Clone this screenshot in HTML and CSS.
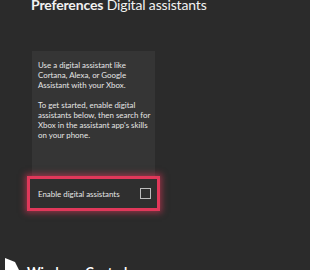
FILE: index.html
```html
<!DOCTYPE html>
<html lang="en">
<head>
    <meta charset="UTF-8">
    <meta name="viewport" content="width=device-width, initial-scale=1.0">
    <title>Digital assistants</title>
    <link rel="stylesheet" href="styles.css">
</head>
<body>

<h1 class="page-title"><strong>Preferences</strong> Digital assistants</h1>

<!-- Settings panel -->
<div class="panel">
    <p>Use a digital assistant like Cortana, Alexa, or Google Assistant with your Xbox.</p>
    <p>To get started, enable digital assistants below, then search for Xbox in the assistant app's skills on your phone.</p>

    <div class="option focused">
        <span class="option-label">Enable digital assistants</span>
        <span class="checkbox"></span>
    </div>
</div>

<!-- Watermark -->
<div class="watermark">
    <svg width="18" height="16" viewBox="0 0 18 16">
        <path d="M0 0 L10 4 L16 16 L0 16 Z" fill="#fff"/>
    </svg>
    <span>Windows Central</span>
</div>

</body>
</html>
```

FILE: styles.css
```css
body {
    margin: 0;
    width: 310px;
    height: 270px;
    overflow: hidden;
    background-color: #2b2b2b;
    font-family: Lato, "Open Sans", sans-serif;
    color: #e6e6e6;
    position: relative;
}
.page-title {
    margin: -5px 0 0 31px;
    font-size: 14px;
    font-weight: normal;
    line-height: 20px;
    letter-spacing: -0.15px;
    color: #f2f2f2;
}
.page-title strong {
    font-weight: 700;
}
.panel {
    margin: 36px 0 0 32px;
    width: 123px;
    padding: 9px 4px 0 6px;
    box-sizing: border-box;
    background-color: #353535;
    height: 155px;
}
.panel p {
    margin: 0 0 10px;
    font-size: 7.9px;
    line-height: 10px;
}
.option {
    margin: 36px -9px 0 -11px;
    height: 35px;
    box-sizing: border-box;
    display: flex;
    align-items: center;
    justify-content: space-between;
    padding: 0 6px 0 8px;
    background-color: #2f2f2f;
    font-size: 7.9px;
}
.option.focused {
    border: 3px solid #e0385a;
    box-shadow: 0 0 6px 2px rgba(224, 56, 90, 0.55);
}
.checkbox {
    width: 9px;
    height: 9px;
    border: 1px solid #bdbdbd;
}
.watermark {
    position: absolute;
    left: 5px;
    top: 258px;
    display: flex;
    align-items: flex-start;
    gap: 4px;
    color: #fff;
    font-weight: 700;
    font-size: 13px;
}
.watermark span {
    margin-top: 6px;
}
```
